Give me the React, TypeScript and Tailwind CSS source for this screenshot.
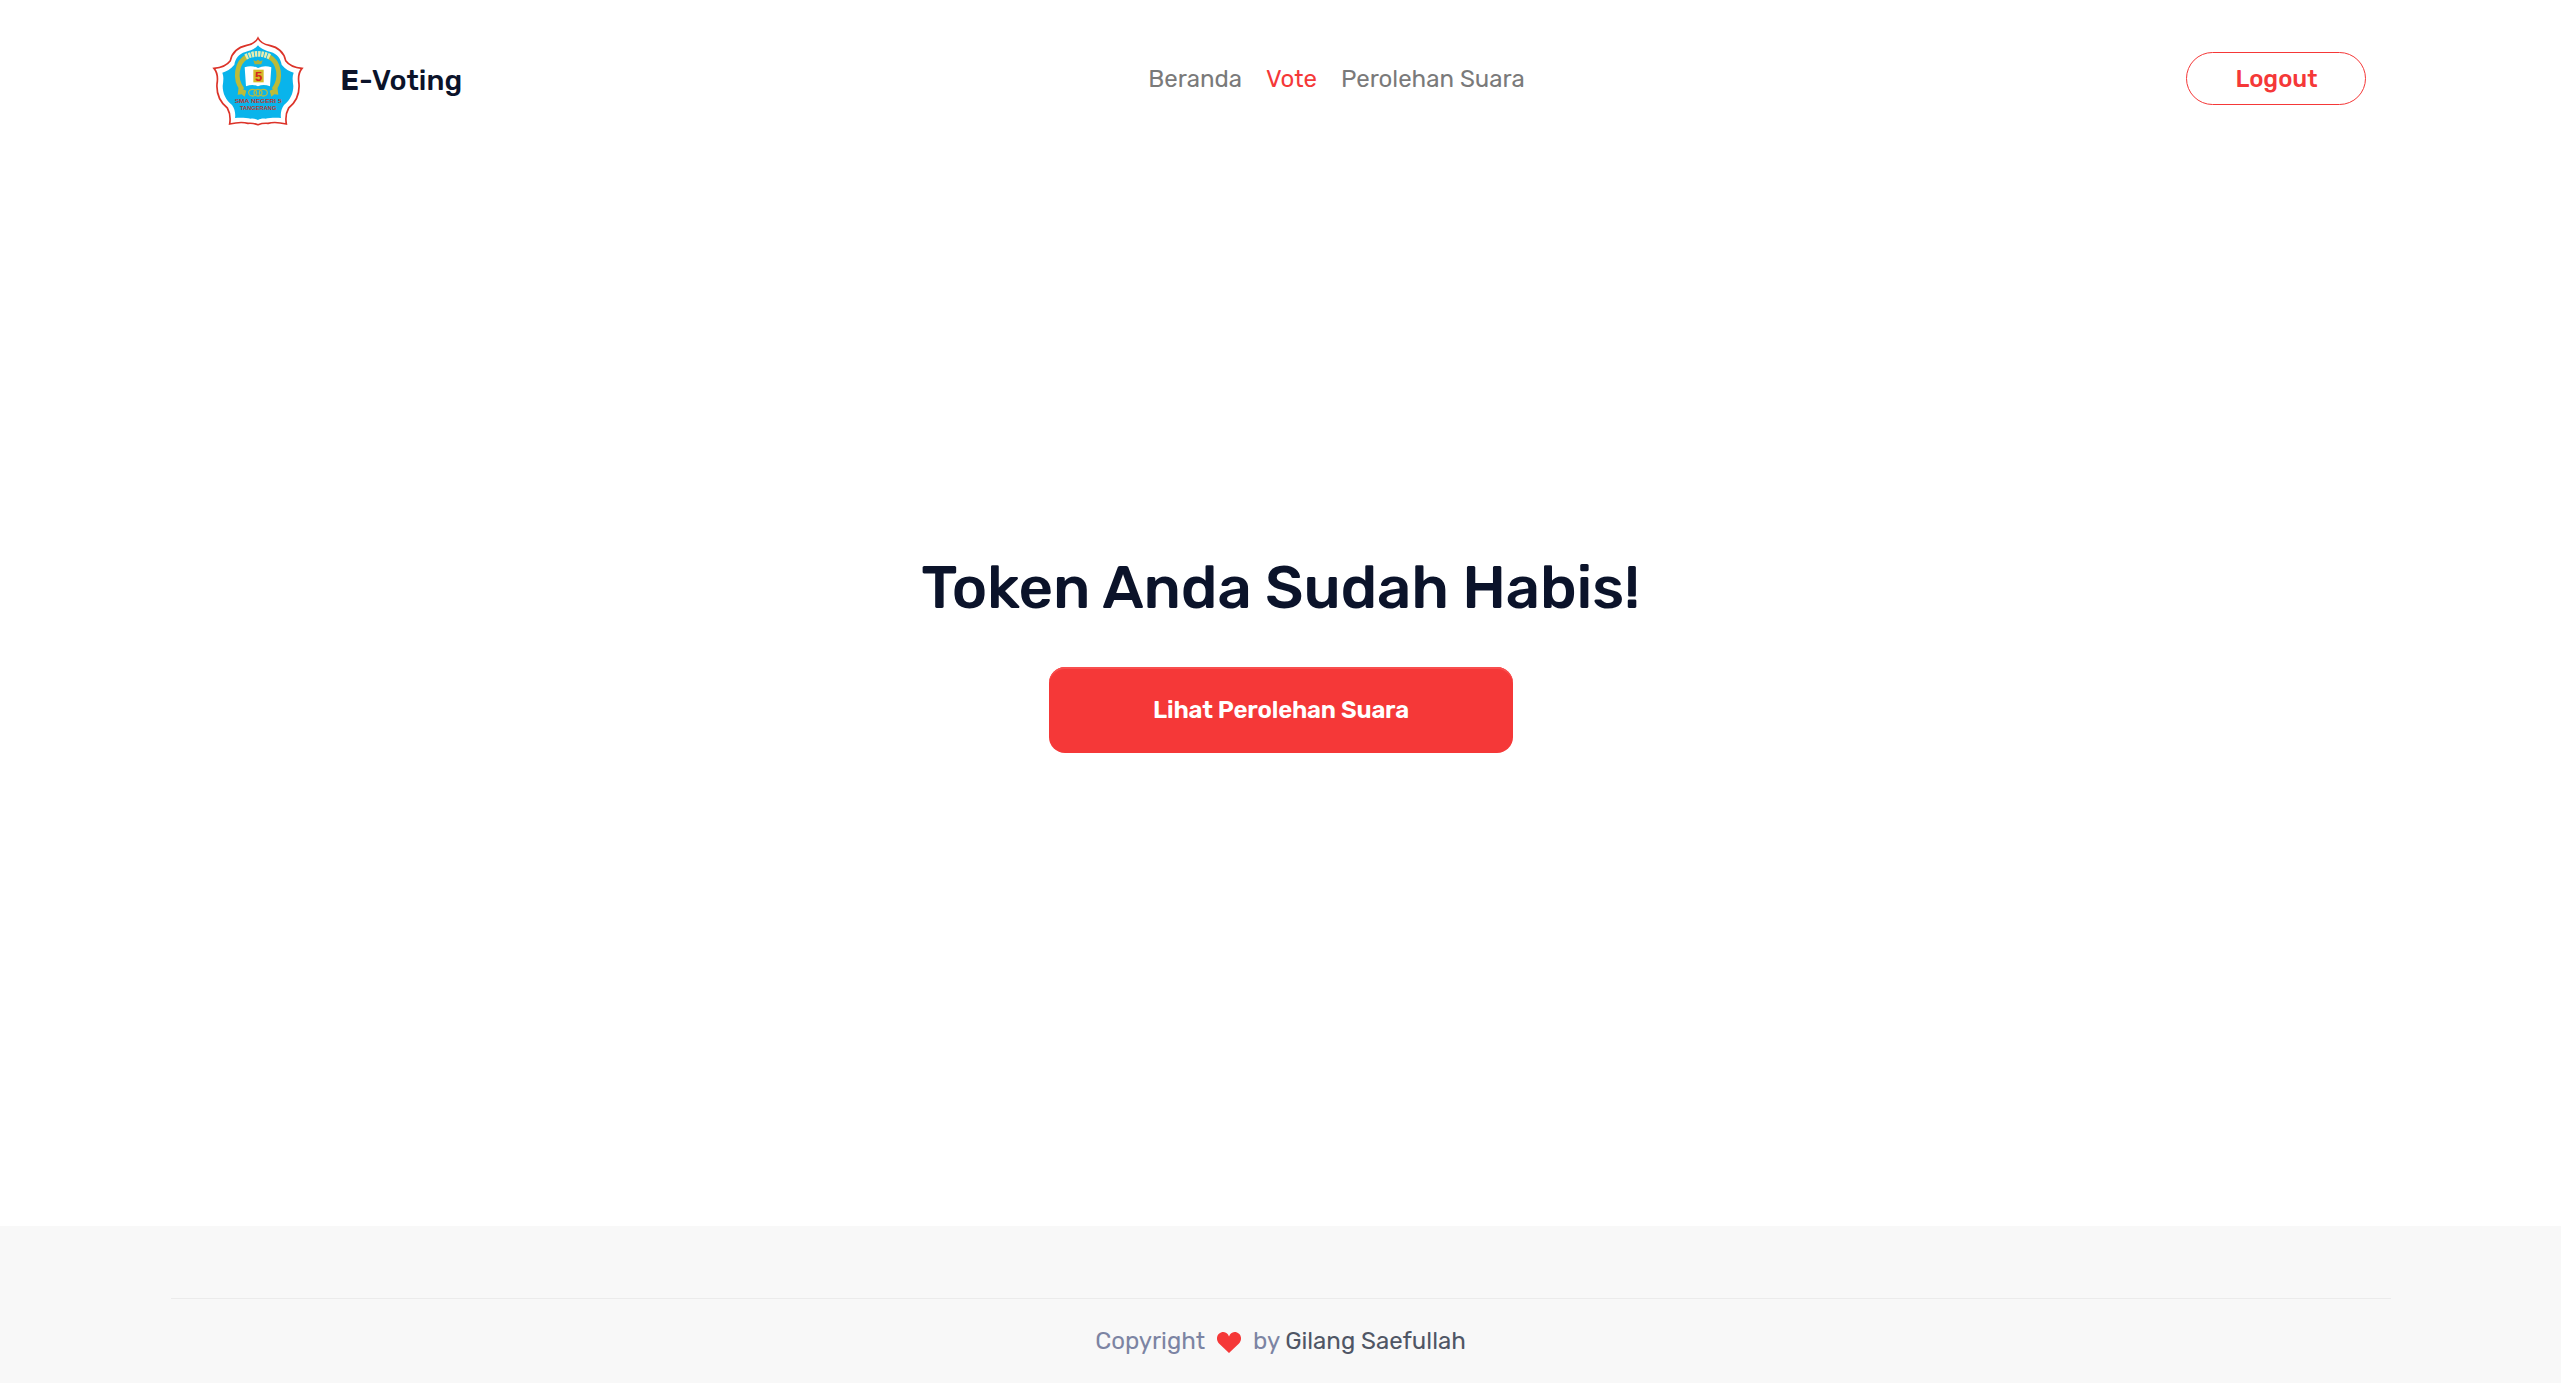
function Logo() {
  return (
    <svg viewBox="0 0 288 288" className="size-24 shrink-0" role="img" aria-label="SMA Negeri 5 Tangerang">
      <path
        d="M144 12 C150 24 160 31 178 34 C202 39 221 52 227 80 C238 95 256 101 276 103 C264 117 264 132 267 150 C269 180 256 206 236 222 C227 238 226 252 229 270 C208 265 188 264 174 268 C160 267 152 269 144 272 C136 269 128 267 114 268 C100 264 80 265 59 270 C62 252 61 238 52 222 C32 206 19 180 21 150 C24 132 24 117 12 103 C32 101 50 95 61 80 C67 52 86 39 110 34 C128 31 138 24 144 12Z"
        fill="#fff"
        stroke="#dc3329"
        strokeWidth="5"
      />
      <path
        d="M144 34 C154 46 168 50 182 54 C202 60 212 74 215 92 C226 105 238 112 251 116 C246 128 248 142 250 156 C250 178 241 198 222 213 C213 226 211 240 213 252 C194 250 178 252 166 254 C156 253 150 255 144 258 C138 255 132 253 122 254 C110 252 94 250 75 252 C77 240 75 226 66 213 C47 198 38 178 38 156 C40 142 42 128 37 116 C50 112 62 105 73 92 C76 74 86 60 106 54 C120 50 134 46 144 34Z"
        fill="#09b4eb"
      />
      <path d="M97 167 C71 134 80 85 111 68" fill="none" stroke="#bdbb38" strokeWidth="14" />
      <path d="M191 167 C217 134 208 85 177 68" fill="none" stroke="#bdbb38" strokeWidth="14" />
      <path d="M107 69 Q144 50 181 69" fill="none" stroke="#e9eeb0" strokeWidth="17" strokeDasharray="7.200 2.500" />
      <path d="M86 160 L109 170 L104 188 L95 181 L83 182Z M202 160 L179 170 L184 188 L193 181 L205 182Z" fill="#bdbb38" />
      <path d="M130 79 L138 82 L144 77 L150 82 L158 79 L154 91 H134Z" fill="#a9b33f" />
      <path d="M104 100 Q124 92 144 102 Q164 92 184 100 L180 157 Q160 149 144 157 Q128 149 108 157Z" fill="#fff" />
      <rect x="130" y="107" width="31" height="38" fill="#d5b927" />
      <text x="145.500" y="140" textAnchor="middle" fontSize="39" fontWeight="700" fontFamily="Liberation Sans, sans-serif" fill="#d3261d">5</text>
      <g fill="none" stroke="#b4bb45" strokeWidth="4">
        <ellipse cx="128" cy="176" rx="12" ry="10" />
        <ellipse cx="144" cy="176" rx="12" ry="10" />
        <ellipse cx="160" cy="176" rx="12" ry="10" />
      </g>
      <g fill="#b8392f" fontWeight="700" fontFamily="Liberation Sans, sans-serif" textAnchor="middle">
        <text x="144.500" y="208" fontSize="18" textLength="141" lengthAdjust="spacingAndGlyphs">SMA NEGERI 5</text>
        <text x="144.500" y="227" fontSize="16" textLength="109" lengthAdjust="spacingAndGlyphs">TANGERANG</text>
      </g>
    </svg>
  );
}

function Heart() {
  return (
    <svg viewBox="0 0 24 21" className="mt-0.5 mr-3 ml-3 h-[21px] w-6" fill="#f53838" aria-hidden="true">
      <path d="M12 21 L2 11.500 C-0.800 8.600 -0.600 4 2 1.700 C5 -0.900 9 -0.300 11 2.500 L12 4.500 L13 2.500 C15 -0.300 19 -0.900 22 1.700 C24.600 4 24.800 8.600 22 11.500Z" />
    </svg>
  );
}

export default function App() {
  return (
    <div className="flex h-[1383px] w-full flex-col overflow-hidden bg-white font-['Rubik','Roboto',sans-serif] text-[24px] text-[#0b132a]">
      <header className="mx-auto grid h-[157px] w-[2220px] shrink-0 grid-cols-[1fr_auto_1fr] items-center pr-[25px] pl-[39px]">
        <a href="#" className="flex items-center pt-[7px] text-[28.8px] font-medium">
          <Logo />
          <span className="mb-[5px] ml-[35px] leading-9 whitespace-nowrap"><strong>E</strong>-Voting</span>
        </a>
        <nav className="flex gap-6 pl-[98px] font-normal text-[#7a7a7a]">
          <a href="#">Beranda</a>
          <a href="#" className="text-[#f53838]">Vote</a>
          <a href="#">Perolehan Suara</a>
        </nav>
        <button className="h-[53px] w-[180px] justify-self-end rounded-full border border-[#f53838] pl-0.5 font-medium text-[#f53838]">
          Logout
        </button>
      </header>
      <main className="flex flex-1 flex-col items-center">
        <h1 className="mt-[391px] text-[60px] leading-[80px] font-medium tracking-[-0.18px]">Token Anda Sudah Habis!</h1>
        <a href="#" className="mt-[39px] flex h-[86px] w-[464px] items-center justify-center rounded-2xl bg-[#f53838] pl-px font-semibold tracking-[-0.19px] text-white shadow-[inset_0_2px_0_#f84e4e]">
          Lihat Perolehan Suara
        </a>
      </main>
      <footer className="h-[157px] shrink-0 bg-[#f8f8f8] pt-[72px]">
        <div className="mx-auto flex h-[85px] w-[2220px] items-center justify-center border-t border-[#ebebeb] whitespace-nowrap text-[#7c84a3]">
          <span>Copyright</span>
          <Heart />
          <span>by</span>
          <a href="#" className="ml-[5px] text-[#4f5665]">Gilang Saefullah</a>
        </div>
      </footer>
    </div>
  );
}
